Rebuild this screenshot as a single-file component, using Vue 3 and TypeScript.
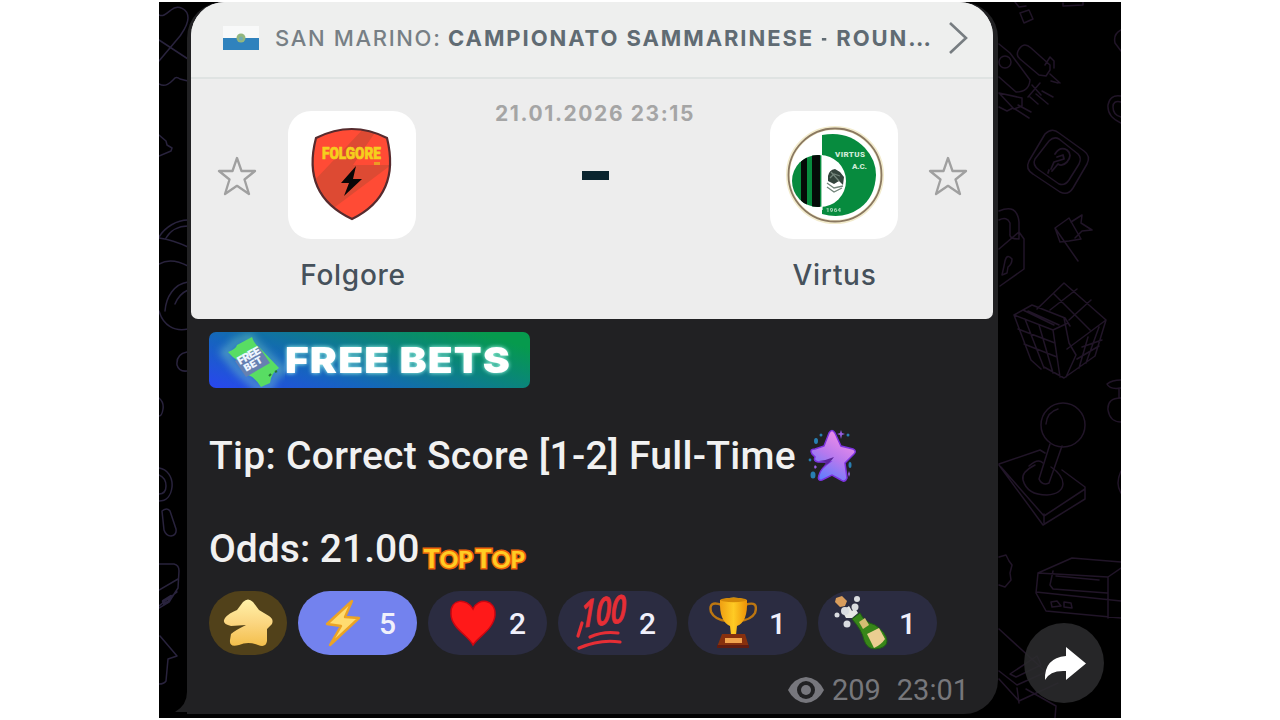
<script setup lang="ts">
interface Reaction {
  kind: 'bolt' | 'heart' | 'hundred' | 'trophy' | 'bottle'
  count: number
  active?: boolean
}

const reactions: Reaction[] = [
  { kind: 'bolt', count: 5, active: true },
  { kind: 'heart', count: 2 },
  { kind: 'hundred', count: 2 },
  { kind: 'trophy', count: 1 },
  { kind: 'bottle', count: 1 },
]
</script>

<template>
  <main class="page">
    <section class="chat">
      <svg class="wallpaper" viewBox="159 2 962 716" fill="none">
        <g class="doodle left">
          <path d="M159 15C163 17 166 14 171 10C178 4 188 9 188 18C188 25 184 30 180 36L159 61M159 40L188 59M159 84C166 88 171 82 174 79Q176 76 180 79L188 81" />
          <path d="M159 135l7 6 1 4 5 3-1 3-12 5" />
          <path d="M188 220C177 220 165 227 159 237M188 226C178 226 170 231 166 238M159 238q14 2 29 9M159 264q12-7 29 2M188 282C174 284 166 297 165 311M188 290q-9 4-13 14M159 311C163 325 174 332 188 329M187 352Q176 354 177 365Q179 372 187 371" />
          <path d="M159 398q5 4 4 11t-4 7M159 468C167 469 173 477 172 487C171 496 166 501 159 501M159 475q7 3 7 11t-7 8M162 511q5-4 8 0l6 18q1 6-5 7-5 0-7-6zM159 564h15q5 1 5 7l-1 17-9 14-10 6M159 590l19-11M159 606l18-14" />
          <path d="M163 601l8-5-2 5-5 3z" stroke-width="2.5" />
          <path d="M160 636l17 20-9 3-2 22q-2 3-7 3" />
        </g>
        <g class="doodle right">
          <path d="M1015 2l4 5 7-1M1020 13l9-3 4 9-9 4zM1063 3v3l20-1V2" />
          <path d="M999 44l11 9 20 27q-1 12-14 12l-17-15M1018 51q5-10 13-3l19 17v5l-4 6-7-1-19-16q-4-3-2-8zM1045 65l5-8 4 4v7M1032 85l9 10M1040 83l-12 14M1050 74l10 9M1051 81l7 2M1042 91l11 6M1036 94l12 10M1030 97l8 7M999 93l15 16 8-3v-8zM1018 105l13 7M1015 109l14 9M999 107l8 4 6-3" />
          <circle cx="1005" cy="62" r="6" />
          <path d="M1121 30q-8 4-6 13l6 8M1121 96q-11-2-13 9-1 12 13 18M1121 102q-8-2-8 5 0 8 8 10" />
          <path d="M1045 134q7-7 14-1l25 18q7 5 3 13l-14 24q-5 8-13 4l-27-18q-8-5-4-13z" />
          <path d="M1049 141q5-5 10-2l19 15q4 4 1 10l-10 16q-4 6-10 4l-20-14q-7-5-4-11z" />
          <path d="M1055 154q5-8 12-4 6 5 0 12-5 5-9 2l-6 7M1057 157l6-2 1 4-10 3-3 7M1048 173l1-3" stroke-width="1.8" />
          <path d="M999 211q18-8 20 11v17q-10 0-9-5v-11q-3-7-11-3M999 249l20-17 5 7v30l-24 17M1005 261q2-8 7-2 0 5-4 8l-1 6-5 2 2-9z" />
          <path d="M1055 228l14-10 12 21-12 2-9 1zM1055 228l23 33M1071 222l11-7-1 8 11 7-10 1-7 7" />
          <path d="M1014 315l18-10 33 13 5 8M1014 315l17 45 10 9M1014 315l39 15 15-7M1053 330l7 47M1037 309l27-26 42 37-39 29M1106 320l-11 36-31 22-20-11M1064 318l5 25 7 12-10 22M1054 294l36 36M1069 320l22-20M1050 310l27-21M1082 347l20-7M1077 359l22-13M1088 337l-9 31M1099 327l-13 36M1025 319l19 49M1039 325l14 48M1018 329l37 14M1024 344l33 13M1028 311l31 14M1023 310l31 15" />
          <circle cx="1063" cy="425" r="22" />
          <path d="M1046 424q1-12 12-15M1050 444l-11 35q3 7 10 4l13-37M999 464l41-14 5 3M1062 470l23 17v12l-42 26-44-60M1085 489l-41 27-43-49M1044 514v9" />
          <path d="M1035 465q-14 7-12 15 4 15 24 15 15-1 16-11 0-9-12-17M1043 463q-5-5-14 3" />
          <path d="M1121 380q-9 0-14 4 3 6 14 4M1119 388v10M1121 398q-14 0-13 12 2 12 13 12M1121 471q-6 13 0 22M999 557l7-2 3 6 3 4-2 8 1 7-6 7-6-2" />
          <path d="M1038 573l34-15 49 4M1038 573l-2 20 10 18 75 7M1038 573l70 4 13-9M1108 577v41M1036 592l85 9M1053 571l-3 14 3 4 54 4M1056 576l43 4M1051 602l6-1 4 5-9 1zM1064 602l7 1 1 5-8-1z" />
          <path d="M999 629l47 43-29 13-18-14M999 679l20 22 39-18M1010 674l27-18 4 9-25 12zM1017 688l2 15M1026 689l30 17-1 12" />
        </g>
      </svg>

      <article class="bubble">
        <svg class="tail" viewBox="0 0 24 34"><path d="M12 0V12Q12 25 0 32H24V0Z" fill="#212123" /></svg>
        <section class="match">
          <header class="league">
            <svg class="flag" viewBox="0 0 36 24"><path d="M0 0H36V12H0Z" fill="#f8f9f9" /><path d="M0 12H36V24H0Z" fill="#2f82bd" /><circle cx="18" cy="12" r="4.500" fill="#92b77e" /><circle cx="18" cy="12.500" r="2" fill="#75adae" /></svg>
            <span class="country">SAN MARINO:</span>
            <strong class="competition">CAMPIONATO SAMMARINESE <span class="hyphen">-</span> ROUN<span class="ellipsis">...</span></strong>
            <svg class="chevron" viewBox="0 0 20 34"><path d="M2 2L18 17L2 32" /></svg>
          </header>
          <div class="fixture">
            <svg class="star" viewBox="0 0 42 42"><path d="M21 3L25.500 16H39L28.500 24.500L33 39L21 30.800L9 39L13.500 24.500L3 16H16.500Z" /></svg>
            <div class="team">
              <div class="badge">
                <svg viewBox="0 0 128 128">
                  <defs><clipPath id="shield"><path d="M28 27Q64 9 99 27Q111 82 64 108Q15 82 28 27Z" /></clipPath></defs>
                  <path d="M28 27Q64 9 99 27Q113 84 64 108Q13 84 28 27Z" fill="#ff4b35" />
                  <g clip-path="url(#shield)" fill="#dd4a33"><path d="M78 15L23 73L43 99L103 54L65 54L88 20Z" /></g>
                  <path d="M28 27Q64 9 99 27Q113 84 64 108Q13 84 28 27Z" fill="none" stroke="#562b2e" stroke-width="2.2" />
                  <text x="34" y="48" textLength="59" lengthAdjust="spacingAndGlyphs" fill="#f5cf1d" stroke="#f5cf1d" stroke-width=".7" font-family="Roboto, sans-serif" font-size="17" font-weight="900">FOLGORE</text>
                  <path d="M86 51H92V54H86Z" fill="#ed9a25" />
                  <path d="M68 55L53 72H61L56 85L74 68H65Z" fill="#090607" />
                </svg>
              </div>
              <span class="team-name folgore">Folgore</span>
            </div>
            <div class="result"><time>21.01.2026 23:15</time><i class="dash"></i></div>
            <div class="team">
              <div class="badge">
                <svg viewBox="0 0 128 128">
                  <defs><clipPath id="disc"><circle cx="48" cy="70" r="26" /></clipPath></defs>
                  <circle cx="65" cy="64" r="47" fill="#fff" stroke="#f2ebcd" stroke-width="4" />
                  <circle cx="65" cy="64" r="46.500" fill="none" stroke="#8a7860" stroke-width="1.8" />
                  <path d="M52 24Q78 19 95 37Q106 49 106 64Q105 86 90 97Q73 109 52 103Z" fill="#078b3e" />
                  <circle cx="50" cy="70" r="26" fill="#fff" />
                  <g clip-path="url(#disc)"><path d="M22 42H52V98H22Z" fill="#078b3e" /><path d="M31 42H37V98H31ZM42 42H50V98H42Z" fill="#050b08" /></g>
                  <path d="M52 44V99" stroke="#fff" stroke-width="1.2" />
                  <path d="M58 65q1-6 7-7l5 3 4 5-1 8-4-4-5 3-6-3z" fill="#34443d" />
                  <path d="M60 67l4-4 6 2M57 72l7 5 9-2M57 76l7 5 8-4M61 61l8 9" fill="none" stroke="#72847a" stroke-width="1.3" />
                  <g fill="#cfead7" font-family="Roboto, sans-serif" font-weight="900"><text x="65" y="46" font-size="8" textLength="30">VIRTUS</text><text x="82" y="58" font-size="8" textLength="15">A.C.</text><text x="56" y="101" font-size="6" textLength="15" opacity=".75">1964</text></g>
                </svg>
              </div>
              <span class="team-name virtus">Virtus</span>
            </div>
            <svg class="star" viewBox="0 0 42 42"><path d="M21 3L25.500 16H39L28.500 24.500L33 39L21 30.800L9 39L13.500 24.500L3 16H16.500Z" /></svg>
          </div>
        </section>

        <section class="message">
          <div class="bets">
            <svg class="ticket" viewBox="0 0 76 56">
              <path d="M15 20Q24 16 25 11L41 5Q44 12 49 15L73 38Q64 42 61 54L49 56Q39 46 31 40Z" class="glow" />
              <path d="M19 20Q27 17 28 13L43 5Q45 12 51 16L70 36Q62 41 61 51L52 55Q46 45 37 42L29 29Q24 26 19 20Z" fill="#58dd63" />
              <path d="M26 29L50 15L61 31L37 45Z" fill="#6680b1" />
              <g transform="translate(31 33) rotate(-30)" fill="#edf5ff" font-family="Inter, sans-serif" font-weight="900"><text font-size="11" textLength="25">FREE</text><text x="2" y="9" font-size="10" textLength="20">BET</text></g>
              <path d="M60 44l2-2M66 40l2-1" stroke="#277536" stroke-width="2" />
            </svg>
            <svg class="bets-label" viewBox="0 0 240 56"><text x="0" y="41" textLength="226" lengthAdjust="spacingAndGlyphs">FREE BETS</text></svg>
          </div>
          <p class="tip"><span>Tip: Correct Score [1-2] Full-Time</span>
            <svg class="purple-star" viewBox="0 0 54 54">
              <defs><linearGradient id="violet" x1=".7" y1="0" x2=".2" y2="1"><stop stop-color="#f590e8" /><stop offset=".5" stop-color="#b779ee" /><stop offset="1" stop-color="#567eff" /></linearGradient></defs>
              <path d="M24 4Q27 -1 30 4L36 17L48 20Q52 22 49 25L40 34L42 49Q40 54 36 51L27 46L17 51Q12 52 14 46Q16 39 25 33L13 33Q8 32 10 28L7 25Q4 20 10 20L19 17Z" fill="url(#violet)" stroke="#7c33df" stroke-width="1.500" />
              <path d="M14 32Q22 31 29 28Q25 34 19 37L21 33Z" fill="#5d279c" />
              <g fill="#287eb1"><ellipse cx="11" cy="12" rx="2" ry="3" /><circle cx="16" cy="6" r="1.500" /><circle cx="43" cy="6" r="1.500" /><ellipse cx="45" cy="36" rx="1.500" ry="3" /><ellipse cx="8" cy="46" rx="2.500" ry="3.500" /><circle cx="5" cy="31" r="1.400" /></g>
              <path d="M36 1l1 3 3 1-3 1-1 4-1-4-3-1 3-1M44 42l1 3-1 3-1-3M10 36l2 2-2 2-1-2" fill="#955de1" />
            </svg>
          </p>
          <p class="odds"><span>Odds: 21.00</span>
            <span class="top"><b>T</b>OP <b>T</b>OP</span>
          </p>
          <div class="reactions">
            <div class="favorite"><svg viewBox="0 0 78 64"><defs><linearGradient id="cream" x1="0" y1="0" x2="0" y2="1"><stop stop-color="#fff2a9" /><stop offset=".5" stop-color="#fbd681" /><stop offset="1" stop-color="#f3bf4c" /></linearGradient></defs><path d="M34 11Q39 6 44 11L50 19L60 25Q65 28 63 33L58 38V50Q57 57 49 54Q39 50 30 54Q20 57 21 49L22 43Q25 40 37 34L22 35Q12 33 16 27Q20 22 28 19Z" fill="url(#cream)" /></svg></div>
            <div v-for="reaction in reactions" :key="reaction.kind" class="reaction" :class="{ active: reaction.active }">
              <svg class="emoji" viewBox="0 0 60 64">
                <defs><linearGradient id="amber"><stop stop-color="#ef9f12" /><stop offset=".5" stop-color="#ffcb24" /><stop offset="1" stop-color="#ed9207" /></linearGradient></defs>
                <template v-if="reaction.kind === 'bolt'"><path d="M54 10L29 33L43 35L32 54L61 27L47 26Z" fill="#ffdc70" stroke="#eca324" stroke-width="2.4" stroke-linejoin="round" /></template>
                <template v-else-if="reaction.kind === 'heart'"><path d="M45 54C41 45 23 37 23 23C22 7 39 7 45 18C50 6 68 8 67 24C66 38 50 46 45 54Z" fill="#ff1919" stroke="#c90611" stroke-width="1.500" /></template>
                <template v-else-if="reaction.kind === 'hundred'"><text transform="rotate(-7 20 42) skewX(-8)" x="28" y="37" textLength="46" lengthAdjust="spacingAndGlyphs" font-family="Open Sans, sans-serif" font-style="italic" font-size="38" font-weight="600" fill="#e62e35" stroke="#e62e35" stroke-width=".8">100</text><path d="M24 32L20 45M32 46Q45 40 60 42M21 57Q42 48 62 51" fill="none" stroke="#e62e35" stroke-width="3.2" stroke-linecap="round" /></template>
                <template v-else-if="reaction.kind === 'trophy'"><path d="M34 14Q20 9 23 21Q27 29 39 30M57 14Q71 9 67 22Q63 29 51 30" fill="none" stroke="#bc7611" stroke-width="2.500" /><path d="M32 9Q46 4 59 9Q60 31 49 35L48 44H43L42 35Q31 30 32 9Z" fill="url(#amber)" /><ellipse cx="45.500" cy="9" rx="13" ry="2.200" fill="#d48908" /><path d="M34 43H57L61 56H29Z" fill="#87300e" /><path d="M37 47H54V52H37Z" fill="#f1a34e" /><path d="M29 54H61V57H29Z" fill="#5f1c12" /></template>
                <template v-else><path d="M34 28L42 22Q46 31 57 34Q68 41 69 50Q69 57 57 58Q49 58 46 49Q44 39 34 28Z" fill="#388619" stroke="#216015" /><path d="M49 43L61 37L67 48Q63 54 56 57Z" fill="#ebcd91" /><path d="M41 31l6-4 4 7-6 4z" fill="#d4bd72" /><path d="M18 7l6-2 5 5-2 5-5 1-5-5z" fill="#d99d5c" /><path d="M28 27L24 20L31 15L34 20L37 17L40 22L34 27Z" fill="#e7e8e4" /><g fill="#d9dce0"><circle cx="19" cy="24" r="2.500" /><circle cx="39" cy="8" r="3" /><circle cx="29" cy="33" r="3.500" /><circle cx="27" cy="20" r="4" /><circle cx="37" cy="16" r="3.500" /></g></template>
              </svg>
              <span>{{ reaction.count }}</span>
            </div>
          </div>
          <footer><svg viewBox="0 0 36 26"><path d="M0 13Q6 1 18 0Q30 1 36 13Q30 25 18 26Q6 25 0 13Z" fill="#77777d" /><circle cx="18" cy="13" r="9" fill="#212123" /><circle cx="18" cy="13" r="5" fill="#77777d" /></svg><span class="views">209</span><time>23:01</time></footer>
        </section>
      </article>
      <button class="share" aria-label="Share"><svg viewBox="0 0 80 80"><path d="M42 24L62 40.500L42 57V48Q26 47 21 57Q20 35 42 33Z" fill="#fff" /></svg></button>
    </section>
  </main>
</template>

<style>
body { background: #fff; overflow: hidden; }
</style>

<style scoped>
* { box-sizing: border-box; }
.page { width: 1280px; height: 720px; padding: 2px 159px; background: #fff; }
.chat { position: relative; width: 962px; height: 716px; padding-left: 28px; overflow: hidden; background: #000; }
.wallpaper { position: absolute; inset: 0; width: 962px; height: 716px; }
.doodle { stroke-width: 1.5; stroke-linejoin: round; stroke-linecap: round; }
.left { stroke: #29233d; }
.right { stroke: #211528; }
.bubble { position: relative; width: 811px; height: 712px; padding: 0 5px 0 4px; background: #212123; border-radius: 36px 36px 34px 0; }
.tail { position: absolute; left: -12px; bottom: 0; width: 24px; height: 34px; }
.match { width: 802px; height: 317px; overflow: hidden; border-radius: 34px 34px 7px 7px; background: #ededed; font-family: Inter, sans-serif; }
.league { display: flex; align-items: center; height: 77px; padding: 0 24px 4px 32px; border-bottom: 2px solid #dfe3e2; background: #eeefee; white-space: nowrap; }
.flag { width: 36px; height: 24px; margin-top: 1px; }
.country { width: 173px; margin-left: 16px; color: #777f85; font-size: 22px; font-weight: 500; letter-spacing: 1.65px; }
.competition { width: 492px; color: #606b73; font-size: 22px; font-weight: 700; letter-spacing: 1.92px; }
.hyphen { display: inline-block; width: 8px; transform: scaleX(.6); transform-origin: left; }
.ellipsis { letter-spacing: .3px; }
.chevron { width: 20px; height: 34px; margin-left: 8px; fill: none; stroke: #777d81; stroke-width: 2.6; }
.fixture { display: grid; grid-template-columns: 42px 127px 1fr 127px 42px; column-gap: 30px; padding: 32px 24px 0 25px; }
.star { width: 42px; height: 42px; margin-top: 44px; fill: none; stroke: #a0a0a0; stroke-width: 2.3; stroke-linejoin: round; }
.team { display: flex; align-items: center; flex-direction: column; }
.badge { width: 128px; height: 128px; border-radius: 23px; background: #fff; }
.badge svg { display: block; width: 128px; height: 128px; }
.team-name { margin-top: 18px; line-height: 36px; color: #46515b; font-size: 28px; font-weight: 500; white-space: nowrap; letter-spacing: .7px; }
.folgore { padding-left: 3px; }
.virtus { padding-left: 2px; }
.result { display: flex; flex-direction: column; align-items: center; padding-left: 5px; white-space: nowrap; }
.result time { margin-top: -10px; color: #a5a5a5; font-size: 21px; line-height: 26px; font-weight: 700; letter-spacing: 1.6px; }
.dash { width: 27px; height: 9px; margin-top: 44px; background: #0a252f; }
.message { padding: 13px 0 0 18px; font-family: Roboto, sans-serif; color: #f1f1f1; }
.bets { display: flex; align-items: center; width: 321px; height: 56px; border-radius: 7px; background: linear-gradient(18deg, #2946ef 0%, #1565bd 32%, #0a857b 65%, #069a4d 90%); overflow: hidden; }
.ticket { width: 76px; height: 56px; flex: none; }
.glow { fill: none; stroke: #94eec2; stroke-width: 6; opacity: .5; filter: blur(4px); }
.bets-label { width: 240px; height: 56px; fill: #fff; font: 900 36px Inter, sans-serif; letter-spacing: 1px; filter: drop-shadow(0 0 2px #a9fff1); }
p { display: flex; margin: 0; font-size: 39px; line-height: 46px; white-space: nowrap; }
.tip { height: 46px; margin-top: 45px; letter-spacing: .28px; font-weight: 500; }
.purple-star { width: 54px; height: 54px; margin: -4px 0 0 9px; }
.odds { height: 46px; margin-top: 47px; font-weight: 500; }
.top { margin: 18px 0 0 4px; height: 28px; line-height: 28px; font-family: Lato, sans-serif; font-size: 23px; font-weight: 900; color: #ffcc24; -webkit-text-stroke: 3px #ee6508; paint-order: stroke fill; word-spacing: -2px; }
.top b { font-size: 27px; font-weight: 900; }
.reactions { display: flex; gap: 11px; margin-top: 19px; }
.favorite { width: 78px; height: 64px; border-radius: 32px; background: #51411a; }
.favorite svg, .emoji { display: block; height: 64px; }
.reaction { display: flex; width: 119px; height: 64px; border-radius: 32px; background: #2b2c41; }
.reaction.active { background: #7382ee; }
.emoji { width: 60px; overflow: visible; }
.reaction span { margin-left: 21px; font-size: 30px; line-height: 65px; font-weight: 500; color: #f0f0fb; }
footer { display: flex; align-items: center; justify-content: flex-end; height: 36px; margin-top: 17px; padding-right: 24px; color: #77777b; font-size: 29px; }
footer svg { width: 36px; height: 26px; margin-right: 8px; }
footer time { margin-left: 16px; }
.share { position: absolute; right: 17px; top: 621px; width: 80px; height: 80px; padding: 0; border: 0; border-radius: 50%; background: rgba(43, 43, 45, .88); }
.share svg { display: block; width: 80px; height: 80px; }
</style>
